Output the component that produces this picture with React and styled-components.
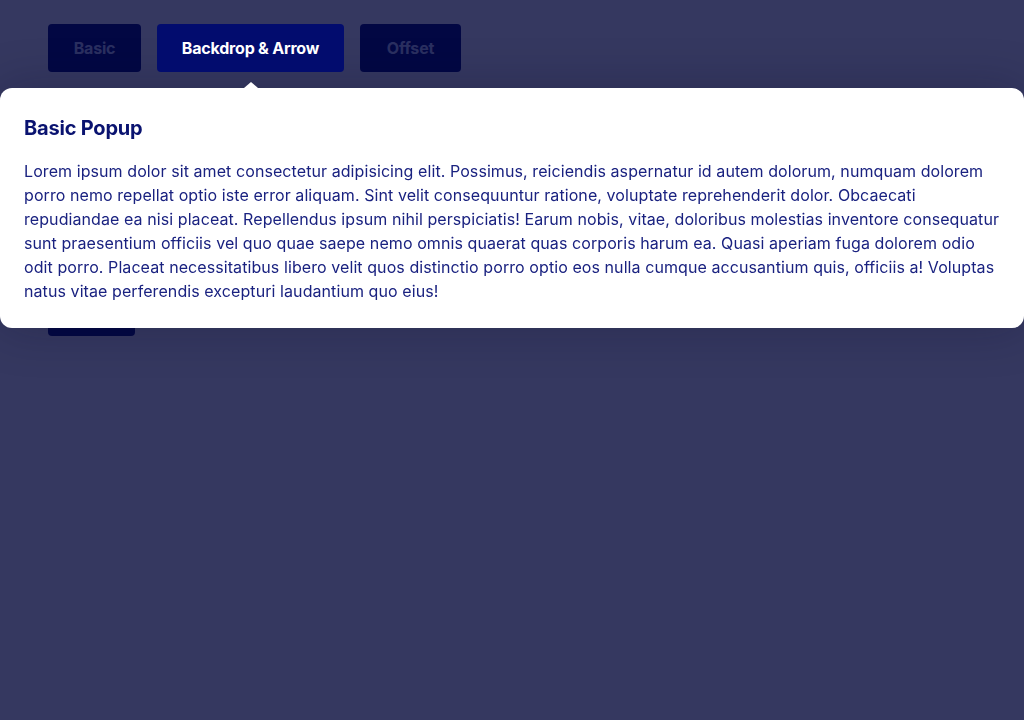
import React from "react";
import styled, { createGlobalStyle } from "styled-components";

const GlobalStyle = createGlobalStyle`
  html, body {
    margin: 0;
    padding: 0;
    height: 100%;
  }
  body {
    font-family: Inter, "Noto Sans", sans-serif;
    background: #ffffff;
  }
`;

const Page = styled.div`
  position: relative;
  min-height: 720px;
  padding: 24px 48px;
  box-sizing: border-box;
  background: #ffffff;
`;

const Backdrop = styled.div`
  position: fixed;
  inset: 0;
  background: rgba(2, 6, 56, 0.8);
  z-index: 1;
`;

const Tabs = styled.div`
  display: flex;
  gap: 16px;
`;

const Tab = styled.button`
  position: relative;
  width: ${(p) => p.$w || "auto"};
  height: 48px;
  padding: 0;
  border: none;
  border-radius: 4px;
  font-family: Inter, "Noto Sans", sans-serif;
  font-size: 16px;
  font-weight: 700;
  letter-spacing: -0.2px;
  cursor: pointer;
  background: #020c6e;
  color: ${(p) => (p.$active ? "#ffffff" : "#c9d2ff")};
  z-index: ${(p) => (p.$active ? 3 : 0)};
`;

const Trigger = styled(Tab)`
  margin-top: 224px;
  height: 40px;
`;

const Popup = styled.div`
  position: absolute;
  top: 88px;
  left: 0;
  right: 0;
  z-index: 2;
  background: #ffffff;
  border-radius: 12px;
  padding: 24px 24px 25px;
  box-shadow: 0 0 48px rgba(10, 12, 40, 0.25);
  color: #0a1370;
`;

const Arrow = styled.span`
  position: absolute;
  top: -6px;
  left: 244px;
  width: 0;
  height: 0;
  border-left: 7px solid transparent;
  border-right: 7px solid transparent;
  border-bottom: 6px solid #ffffff;
`;

const Title = styled.h3`
  margin: 0 0 15px;
  font-size: 20px;
  line-height: 32px;
  font-weight: 700;
  letter-spacing: -0.2px;
`;

const Body = styled.p`
  margin: 0;
  font-size: 16px;
  line-height: 24px;
  letter-spacing: 0.08px;
  color: #1a2280;
`;

const text =
  "Lorem ipsum dolor sit amet consectetur adipisicing elit. Possimus, reiciendis aspernatur id autem dolorum, numquam dolorem porro nemo repellat optio iste error aliquam. Sint velit consequuntur ratione, voluptate reprehenderit dolor. Obcaecati repudiandae ea nisi placeat. Repellendus ipsum nihil perspiciatis! Earum nobis, vitae, doloribus molestias inventore consequatur sunt praesentium officiis vel quo quae saepe nemo omnis quaerat quas corporis harum ea. Quasi aperiam fuga dolorem odio odit porro. Placeat necessitatibus libero velit quos distinctio porro optio eos nulla cumque accusantium quis, officiis a! Voluptas natus vitae perferendis excepturi laudantium quo eius!";

export default function App() {
  return (
    <>
      <GlobalStyle />
      <Page>
        <Tabs>
          <Tab $w="93px">Basic</Tab>
          <Tab $w="187px" $active>
            Backdrop &amp; Arrow
          </Tab>
          <Tab $w="101px">Offset</Tab>
        </Tabs>
        <Trigger $w="87px">Open</Trigger>
        <Backdrop />
        <Popup>
          <Arrow />
          <Title>Basic Popup</Title>
          <Body>{text}</Body>
        </Popup>
      </Page>
    </>
  );
}
